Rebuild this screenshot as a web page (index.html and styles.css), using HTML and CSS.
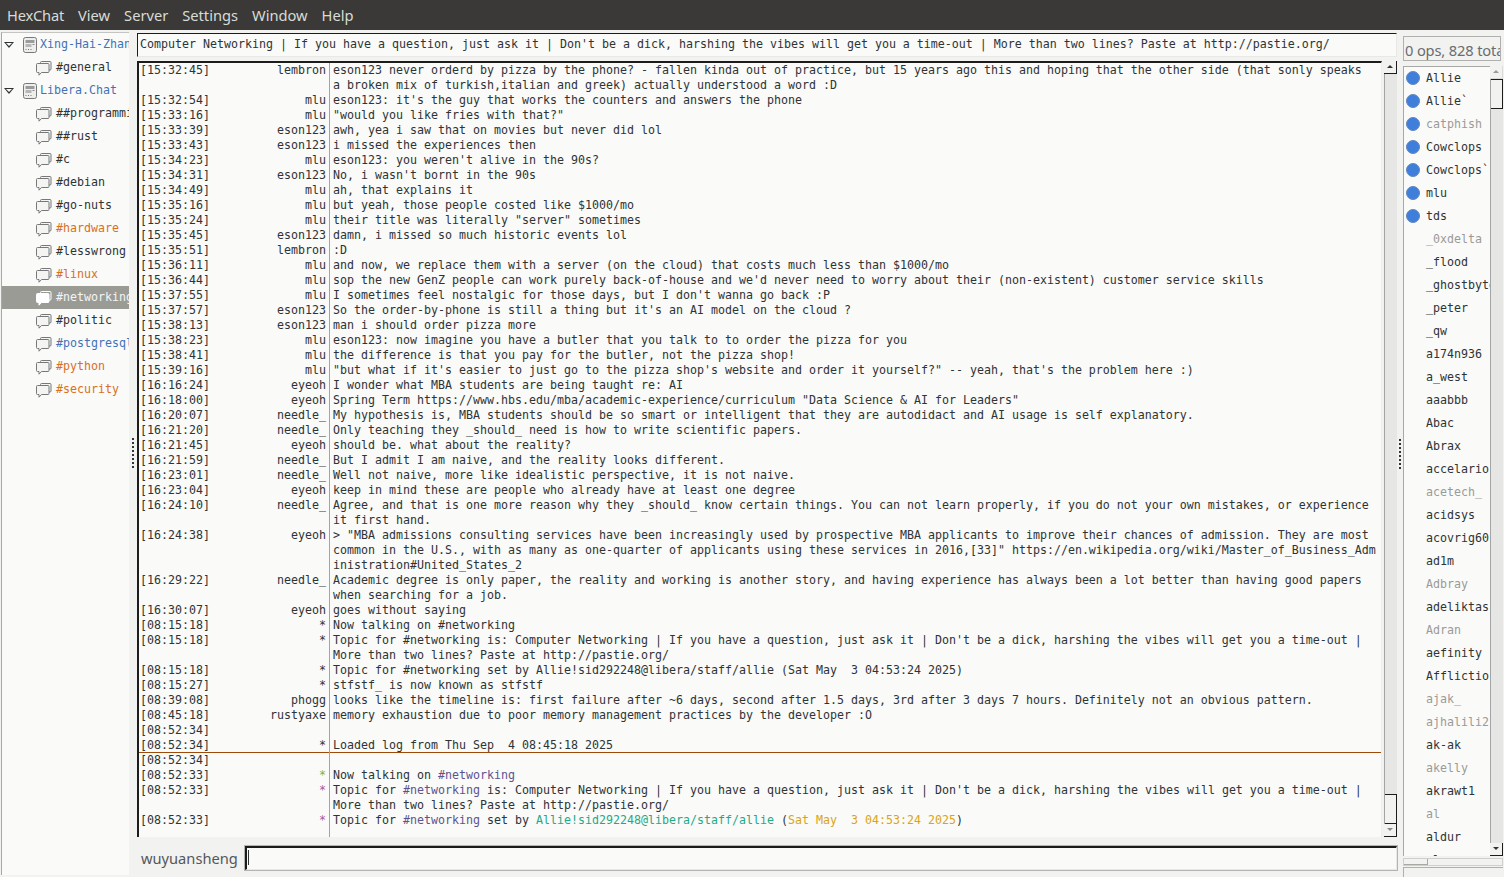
FILE: index.html
```html
<!DOCTYPE html>
<html lang="en">
<head>
<meta charset="utf-8">
<title>HexChat</title>
<link rel="stylesheet" href="styles.css">
</head>
<body>
<svg class="defs" width="0" height="0" aria-hidden="true">
  <symbol id="srv" viewBox="0 0 16 16">
    <rect x="1.500" y="0.500" width="13" height="15" rx="2" fill="#eeeeec" stroke="#77787a"/>
    <rect x="3.500" y="3" width="9" height="3" fill="#9a9b9c"/>
    <rect x="3.500" y="7" width="6" height="3" fill="#b5b6b6"/>
    <rect x="10.500" y="7" width="2" height="1" fill="#888"/>
    <rect x="3.500" y="12" width="1" height="1" fill="#777"/><rect x="6" y="12" width="1" height="1" fill="#777"/><rect x="8.500" y="12" width="1" height="1" fill="#777"/>
  </symbol>
  <symbol id="chan" viewBox="0 0 16 16">
    <path d="M4.500 3.500V2.500a1 1 0 0 1 1-1h8.500a1 1 0 0 1 1 1v6.500a1 1 0 0 1-1 1h-1" fill="#f4f4f2" stroke="#77787a"/>
    <path d="M1.500 3.500h10.500a1 1 0 0 1 1 1v7a1 1 0 0 1-1 1H5.500L3 15.200v-2.700H1.500a1 1 0 0 1-1-1v-7a1 1 0 0 1 1-1z" fill="#f4f4f2" stroke="#77787a"/>
  </symbol>
  <symbol id="chan-w" viewBox="0 0 16 16">
    <path d="M4.500 3.500V2.500a1 1 0 0 1 1-1h8.500a1 1 0 0 1 1 1v6.500a1 1 0 0 1-1 1h-1" fill="none" stroke="#ffffff"/>
    <path d="M1.500 3.500h10.500a1 1 0 0 1 1 1v7a1 1 0 0 1-1 1H5.500L3 15.200v-2.700H1.500a1 1 0 0 1-1-1v-7a1 1 0 0 1 1-1z" fill="#ffffff" stroke="#ffffff"/>
  </symbol>
</svg>
<div class="menubar">
  <span class="first">HexChat</span><span>View</span><span>Server</span><span>Settings</span><span>Window</span><span>Help</span>
</div>
<div class="main">
  <nav class="tree">
    <div class="row srv"><span class="arrow"></span><svg class="ic"><use href="#srv"/></svg><span class="lbl blue">Xing-Hai-Zhang</span></div>
    <div class="row"><svg class="ic"><use href="#chan"/></svg><span class="lbl">#general</span></div>
    <div class="row srv"><span class="arrow"></span><svg class="ic"><use href="#srv"/></svg><span class="lbl blue">Libera.Chat</span></div>
    <div class="row"><svg class="ic"><use href="#chan"/></svg><span class="lbl">##programming</span></div>
    <div class="row"><svg class="ic"><use href="#chan"/></svg><span class="lbl">##rust</span></div>
    <div class="row"><svg class="ic"><use href="#chan"/></svg><span class="lbl">#c</span></div>
    <div class="row"><svg class="ic"><use href="#chan"/></svg><span class="lbl">#debian</span></div>
    <div class="row"><svg class="ic"><use href="#chan"/></svg><span class="lbl">#go-nuts</span></div>
    <div class="row"><svg class="ic"><use href="#chan"/></svg><span class="lbl orange">#hardware</span></div>
    <div class="row"><svg class="ic"><use href="#chan"/></svg><span class="lbl">#lesswrong</span></div>
    <div class="row"><svg class="ic"><use href="#chan"/></svg><span class="lbl orange">#linux</span></div>
    <div class="row sel"><svg class="ic"><use href="#chan-w"/></svg><span class="lbl">#networking</span></div>
    <div class="row"><svg class="ic"><use href="#chan"/></svg><span class="lbl">#politic</span></div>
    <div class="row"><svg class="ic"><use href="#chan"/></svg><span class="lbl blue">#postgresql</span></div>
    <div class="row"><svg class="ic"><use href="#chan"/></svg><span class="lbl orange">#python</span></div>
    <div class="row"><svg class="ic"><use href="#chan"/></svg><span class="lbl orange">#security</span></div>
  </nav>
  <div class="grip grip-l"></div>
  <section class="center">
    <div class="topic">Computer Networking | If you have a question, just ask it | Don't be a dick, harshing the vibes will get you a time-out | More than two lines? Paste at http://pastie.org/</div>
    <div class="chatwrap">
      <div class="chat">
        <div class="ln"><i>[15:32:45]</i><b>lembron</b><p>eson123 never orderd by pizza by the phone? - fallen kinda out of practice, but 15 years ago this and hoping that the other side (that sonly speaks<br>a broken mix of turkish,italian and greek) actually understood a word :D</p></div>
        <div class="ln"><i>[15:32:54]</i><b>mlu</b><p>eson123: it's the guy that works the counters and answers the phone</p></div>
        <div class="ln"><i>[15:33:16]</i><b>mlu</b><p>"would you like fries with that?"</p></div>
        <div class="ln"><i>[15:33:39]</i><b>eson123</b><p>awh, yea i saw that on movies but never did lol</p></div>
        <div class="ln"><i>[15:33:43]</i><b>eson123</b><p>i missed the experiences then</p></div>
        <div class="ln"><i>[15:34:23]</i><b>mlu</b><p>eson123: you weren't alive in the 90s?</p></div>
        <div class="ln"><i>[15:34:31]</i><b>eson123</b><p>No, i wasn't bornt in the 90s</p></div>
        <div class="ln"><i>[15:34:49]</i><b>mlu</b><p>ah, that explains it</p></div>
        <div class="ln"><i>[15:35:16]</i><b>mlu</b><p>but yeah, those people costed like $1000/mo</p></div>
        <div class="ln"><i>[15:35:24]</i><b>mlu</b><p>their title was literally "server" sometimes</p></div>
        <div class="ln"><i>[15:35:45]</i><b>eson123</b><p>damn, i missed so much historic events lol</p></div>
        <div class="ln"><i>[15:35:51]</i><b>lembron</b><p>:D</p></div>
        <div class="ln"><i>[15:36:11]</i><b>mlu</b><p>and now, we replace them with a server (on the cloud) that costs much less than $1000/mo</p></div>
        <div class="ln"><i>[15:36:44]</i><b>mlu</b><p>sop the new GenZ people can work purely back-of-house and we'd never need to worry about their (non-existent) customer service skills</p></div>
        <div class="ln"><i>[15:37:55]</i><b>mlu</b><p>I sometimes feel nostalgic for those days, but I don't wanna go back :P</p></div>
        <div class="ln"><i>[15:37:57]</i><b>eson123</b><p>So the order-by-phone is still a thing but it's an AI model on the cloud ?</p></div>
        <div class="ln"><i>[15:38:13]</i><b>eson123</b><p>man i should order pizza more</p></div>
        <div class="ln"><i>[15:38:23]</i><b>mlu</b><p>eson123: now imagine you have a butler that you talk to to order the pizza for you</p></div>
        <div class="ln"><i>[15:38:41]</i><b>mlu</b><p>the difference is that you pay for the butler, not the pizza shop!</p></div>
        <div class="ln"><i>[15:39:16]</i><b>mlu</b><p>"but what if it's easier to just go to the pizza shop's website and order it yourself?" -- yeah, that's the problem here :)</p></div>
        <div class="ln"><i>[16:16:24]</i><b>eyeoh</b><p>I wonder what MBA students are being taught re: AI</p></div>
        <div class="ln"><i>[16:18:00]</i><b>eyeoh</b><p>Spring Term https://www.hbs.edu/mba/academic-experience/curriculum "Data Science &amp; AI for Leaders"</p></div>
        <div class="ln"><i>[16:20:07]</i><b>needle_</b><p>My hypothesis is, MBA students should be so smart or intelligent that they are autodidact and AI usage is self explanatory.</p></div>
        <div class="ln"><i>[16:21:20]</i><b>needle_</b><p>Only teaching they _should_ need is how to write scientific papers.</p></div>
        <div class="ln"><i>[16:21:45]</i><b>eyeoh</b><p>should be. what about the reality?</p></div>
        <div class="ln"><i>[16:21:59]</i><b>needle_</b><p>But I admit I am naive, and the reality looks different.</p></div>
        <div class="ln"><i>[16:23:01]</i><b>needle_</b><p>Well not naive, more like idealistic perspective, it is not naive.</p></div>
        <div class="ln"><i>[16:23:04]</i><b>eyeoh</b><p>keep in mind these are people who already have at least one degree</p></div>
        <div class="ln"><i>[16:24:10]</i><b>needle_</b><p>Agree, and that is one more reason why they _should_ know certain things. You can not learn properly, if you do not your own mistakes, or experience<br>it first hand.</p></div>
        <div class="ln"><i>[16:24:38]</i><b>eyeoh</b><p>&gt; "MBA admissions consulting services have been increasingly used by prospective MBA applicants to improve their chances of admission. They are most<br>common in the U.S., with as many as one-quarter of applicants using these services in 2016,[33]" https://en.wikipedia.org/wiki/Master_of_Business_Adm<br>inistration#United_States_2</p></div>
        <div class="ln"><i>[16:29:22]</i><b>needle_</b><p>Academic degree is only paper, the reality and working is another story, and having experience has always been a lot better than having good papers<br>when searching for a job.</p></div>
        <div class="ln"><i>[16:30:07]</i><b>eyeoh</b><p>goes without saying</p></div>
        <div class="ln"><i>[08:15:18]</i><b>*</b><p>Now talking on #networking</p></div>
        <div class="ln"><i>[08:15:18]</i><b>*</b><p>Topic for #networking is: Computer Networking | If you have a question, just ask it | Don't be a dick, harshing the vibes will get you a time-out |<br>More than two lines? Paste at http://pastie.org/</p></div>
        <div class="ln"><i>[08:15:18]</i><b>*</b><p>Topic for #networking set by Allie!sid292248@libera/staff/allie (Sat May &nbsp;3 04:53:24 2025)</p></div>
        <div class="ln"><i>[08:15:27]</i><b>*</b><p>stfstf_ is now known as stfstf</p></div>
        <div class="ln"><i>[08:39:08]</i><b>phogg</b><p>looks like the timeline is: first failure after ~6 days, second after 1.5 days, 3rd after 3 days 7 hours. Definitely not an obvious pattern.</p></div>
        <div class="ln"><i>[08:45:18]</i><b>rustyaxe</b><p>memory exhaustion due to poor memory management practices by the developer :O</p></div>
        <div class="ln"><i>[08:52:34]</i><b></b><p></p></div>
        <div class="ln mark"><i>[08:52:34]</i><b>*</b><p>Loaded log from Thu Sep &nbsp;4 08:45:18 2025</p></div>
        <div class="ln"><i>[08:52:34]</i><b></b><p></p></div>
        <div class="ln"><i>[08:52:33]</i><b class="green">*</b><p>Now talking on <span class="chn">#networking</span></p></div>
        <div class="ln"><i>[08:52:33]</i><b class="purple">*</b><p>Topic for <span class="chn">#networking</span> is: Computer Networking | If you have a question, just ask it | Don't be a dick, harshing the vibes will get you a time-out |<br>More than two lines? Paste at http://pastie.org/</p></div>
        <div class="ln last"><i>[08:52:33]</i><b class="purple">*</b><p>Topic for <span class="chn">#networking</span> set by <span class="teal">Allie!sid292248@libera/staff/allie</span> (<span class="gold">Sat May &nbsp;3 04:53:24 2025</span>)</p></div>
      </div>
      <div class="vscroll">
        <span class="sbtn up"></span>
        <span class="strack"><span class="sthumb end"></span></span>
        <span class="sbtn down"></span>
      </div>
    </div>
    <div class="inputrow">
      <span class="me">wuyuansheng</span>
      <div class="input"><span class="caret"></span></div>
    </div>
  </section>
  <div class="grip grip-r"></div>
  <aside class="users">
    <div class="count">0 ops, 828 total</div>
    <div class="listwrap">
      <div class="list">
        <div class="u"><em></em>Allie</div>
        <div class="u"><em></em>Allie`</div>
        <div class="u away"><em></em>catphish</div>
        <div class="u"><em></em>Cowclops</div>
        <div class="u"><em></em>Cowclops`</div>
        <div class="u"><em></em>mlu</div>
        <div class="u"><em></em>tds</div>
        <div class="u away n">_0xdelta</div>
        <div class="u n">_flood</div>
        <div class="u n">_ghostbyte</div>
        <div class="u n">_peter</div>
        <div class="u n">_qw</div>
        <div class="u n">a174n936</div>
        <div class="u n">a_west</div>
        <div class="u n">aaabbb</div>
        <div class="u n">Abac</div>
        <div class="u n">Abrax</div>
        <div class="u n">accelario</div>
        <div class="u away n">acetech_</div>
        <div class="u n">acidsys</div>
        <div class="u n">acovrig60</div>
        <div class="u n">ad1m</div>
        <div class="u away n">Adbray</div>
        <div class="u n">adeliktas</div>
        <div class="u away n">Adran</div>
        <div class="u n">aefinity</div>
        <div class="u n">Afflictio</div>
        <div class="u away n">ajak_</div>
        <div class="u away n">ajhalili2</div>
        <div class="u n">ak-ak</div>
        <div class="u away n">akelly</div>
        <div class="u n">akrawt1</div>
        <div class="u away n">al</div>
        <div class="u n">aldur</div>
        <div class="u n">alex</div>
      </div>
      <div class="vscroll narrow">
        <span class="sbtn up"></span>
        <span class="strack"><span class="sthumb start"></span></span>
        <span class="sbtn down dark"></span>
      </div>
    </div>
    <div class="hscroll"><span class="hthumb"></span></div>
    <div class="status"></div>
  </aside>
</div>
</body>
</html>
```
FILE: styles.css
```css
* { box-sizing: border-box; }
html, body { margin: 0; padding: 0; height: 100%; overflow: hidden; }
body { background: #f2f2f0; width: 1504px; height: 877px; display: flex; flex-direction: column; font-family: "DejaVu Sans Mono", monospace; font-size: 11.63px; color: #2e3436; }
.defs { position: absolute; }

.menubar { height: 30px; flex: none; background: #3a3937; color: #d8dcd8; font: 14.67px/31px "Noto Sans", sans-serif; display: flex; gap: 14px; padding-left: 7px; }
.menubar .first { letter-spacing: -0.2px; }

.main { flex: 1; display: flex; min-height: 0; }

.tree { width: 128px; flex: none; margin: 2px 0 2px 1px; background: #fafaf8; border-left: 1px solid #a8a8a5; border-top: 1px solid #c4c4c2; overflow: hidden; }
.row { height: 23px; display: flex; align-items: center; padding-left: 34px; white-space: nowrap; line-height: 15px; overflow: hidden; }
.row.srv { padding-left: 2px; }
.row .ic { width: 16px; height: 16px; flex: none; margin-right: 4px; }
.arrow { width: 0; height: 0; flex: none; border: 5px solid transparent; border-top: 6px solid #2e3436; border-bottom: 0; margin: 0 8px 0 0; position: relative; }
.arrow::after { content: ""; position: absolute; left: -3px; top: -5px; border: 3px solid transparent; border-top: 3.500px solid #fafaf8; border-bottom: 0; }
.srv .ic { margin-right: 2px; }
.lbl { color: #2e3436; }
.blue { color: #3f73b8; }
.orange { color: #d9701e; }
.sel { background: #9b9b96; }
.sel .lbl { color: #f4f4f2; }

.grip { width: 8px; flex: none; position: relative; }
.grip::after { content: ""; position: absolute; top: 408px; width: 2px; height: 32px; left: 3px; background: repeating-linear-gradient(#2e3436 0 2px, transparent 2px 4px); }
.grip-r { width: 6px; }
.grip-r::after { left: 2px; top: 409px; }

.center { flex: none; width: 1260px; display: flex; flex-direction: column; }
.topic { height: 24px; margin-top: 3px; flex: none; background: #fafaf8; border: 1px solid #e8e8e6; border-top-color: #1c1c1c; border-left-color: #1c1c1c; padding-left: 2px; line-height: 21px; white-space: nowrap; overflow: hidden; }
.chatwrap { flex: none; height: 776px; margin-top: 4px; display: flex; gap: 2px; }
.chat { flex: none; width: 1245px; background: #fafaf8; border-top: 2px solid #1c1c1c; border-left: 2px solid #1c1c1c; border-right: 1px solid #eeeeec; overflow: hidden; display: flex; flex-direction: column; }
.ln { flex: none; display: grid; grid-template-columns: 1px 120px 66px 3px 1fr; line-height: 15px; }
.ln.last { flex: 1; }
.ln i { grid-column: 2; font-style: normal; }
.ln b { grid-column: 3; font-weight: normal; text-align: right; white-space: nowrap; }
.ln p { grid-column: 5; margin: 0; padding: 0 3px; border-left: 1px solid #a4a4a4; min-height: 15px; white-space: nowrap; }
.ln.mark { border-bottom: 1px solid #a04a0a; height: 15px; }
.green { color: #7fb33a; }
.purple { color: #a45aa0; }
.chn { color: #5c5490; }
.teal { color: #1fa98a; }
.gold { color: #d9a514; }

.vscroll { flex: none; width: 13px; display: flex; flex-direction: column; background: #e6e6e4; }
.sbtn { height: 13px; flex: none; background: #f2f2f0; border-right: 1px solid #1c1c1c; border-bottom: 1px solid #1c1c1c; position: relative; }
.sbtn::after { content: ""; position: absolute; left: 3px; top: 4px; border: 3px solid transparent; }
.sbtn.up::after { border-bottom: 3px solid #2e3436; border-top: 0; }
.sbtn.down::after { border-top: 3px solid #8a8a8a; border-bottom: 0; }
.sbtn.down.dark::after { border-top-color: #2e3436; }
.narrow .sbtn.up::after { border-bottom-color: #9a9a9a; }
.narrow .sbtn.up { border-color: #dcdcda; }
.strack { flex: 1; display: flex; flex-direction: column; border-left: 1px solid #a4a4a4; }
.sthumb { height: 30px; background: #f2f2f0; border-right: 1px solid #1c1c1c; border-bottom: 1px solid #1c1c1c; border-top: 1px solid #1c1c1c; }
.sthumb.end { margin-top: auto; }

.inputrow { flex: none; height: 24px; margin-top: 9px; display: flex; align-items: stretch; margin-left: -7px; padding-left: 11px; }
.me { font: 14.67px/24px "Noto Sans", sans-serif; color: #55575a; flex: none; width: 104px; }
.input { flex: 1; background: #fafaf8; border-top: 2px solid #1c1c1c; border-left: 2px solid #1c1c1c; border-right: 1px solid #e8e8e6; border-bottom: 1px solid #e8e8e6; outline: 1px solid #b4b4b2; padding: 2px 0 0 1px; }
.caret { display: block; width: 1px; height: 15px; background: #2e3436; }

.users { flex: none; width: 100px; display: flex; flex-direction: column; }
.count { height: 25px; margin-top: 6px; flex: none; width: 98px; background: #f2f2f0; border: 1px solid #b0b0ae; font: 14.67px/26px "Noto Sans", sans-serif; letter-spacing: -0.15px; color: #6a6c70; padding-left: 1px; white-space: nowrap; overflow: hidden; }
.listwrap { flex: none; height: 790px; margin-top: 5px; display: flex; width: 100px; }
.list { flex: none; width: 87px; background: #fafaf8; border-left: 1px solid #a8a8a5; border-top: 1px solid #a8a8a5; overflow: hidden; }
.u { height: 23px; display: flex; align-items: center; line-height: 15px; white-space: nowrap; padding-left: 2px; color: #2e3436; }
.u em { width: 14px; height: 14px; flex: none; border-radius: 50%; background: #3f7fdb; border: 1px solid #5f88bd; margin-right: 6px; margin-top: -1px; }
.u.n { padding-left: 22px; }
.u.away { color: #9a9a98; }
.hscroll { height: 8px; flex: none; border: 1px solid #cfcfcd; background: #f2f2f0; margin-top: 2px; }
.hthumb { display: block; width: 24px; height: 100%; border-right: 1px solid #a8a8a5; border-bottom: 1px solid #a8a8a5; }
.status { height: 11px; flex: none; margin-top: 1px; border-top: 1px solid #b0b0ae; border-left: 1px solid #b0b0ae; }
```
